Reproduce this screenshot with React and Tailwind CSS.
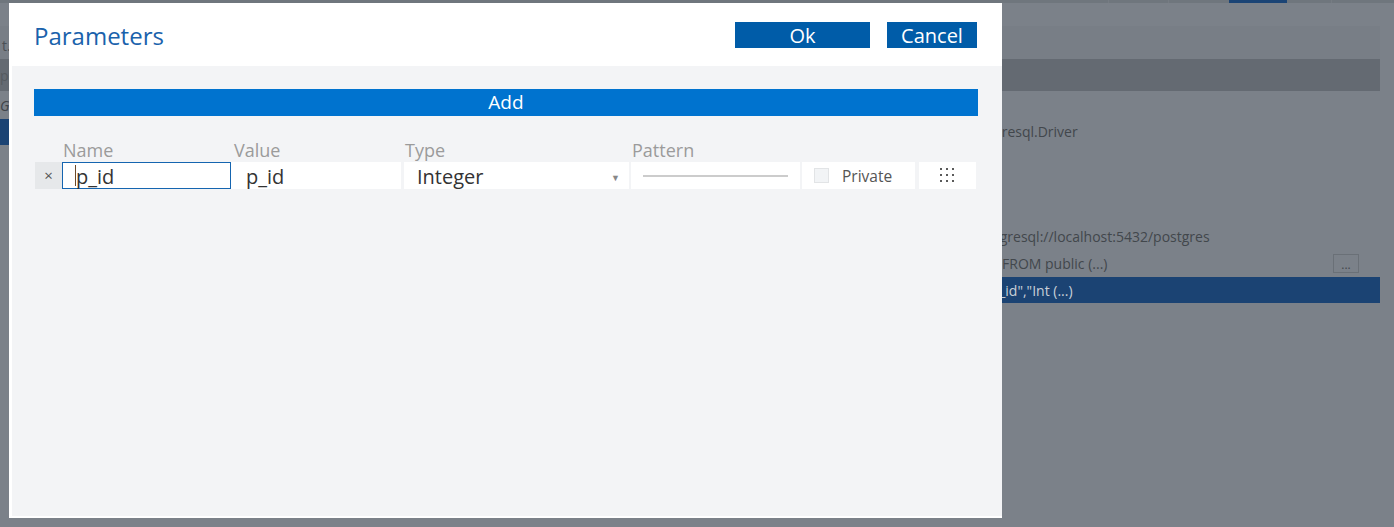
// Background page seen through the modal overlay
function BackgroundPage() {
  return (
    <div className="h-[527px] w-full bg-[#7b8189] overflow-hidden font-['Open_Sans',sans-serif] text-[14px] text-[#42474c]">
      <div className="h-[3px] flex bg-[#6f767d]">
        <div className="w-[1109px] border-r border-[#767c83]" />
        <div className="w-[60px] border-r border-[#767c83]" />
        <div className="w-[60px]" />
        <div className="w-[58px] bg-[#1b4475]" />
        <div className="w-[45px] border-r border-[#767c83]" />
      </div>
      <div className="mr-[14px]">
        <div className="h-[23px]" />
        <div className="h-[33px] bg-[#787e86] flex items-center pl-[2px] pt-[6px] text-[#4a4f55]">t.</div>
        <div className="h-[32px] bg-[#646a72] flex items-center text-[#555a60]">pe</div>
        <div className="flex">
          <div className="w-[90px]">
            <div className="h-[28px] flex items-center italic text-[#3f4449]">Gr</div>
            <div className="h-[26px] bg-[#1b4373]" />
          </div>
          <div className="flex-1 pl-[850px] pt-[27px]">
            <div className="h-[26px] flex items-center whitespace-nowrap">org.postgresql.Driver</div>
            <div className="h-[79px]" />
            <div className="h-[27px] flex items-center whitespace-nowrap">jdbc:postgresql://localhost:5432/postgres</div>
            <div className="h-[27px] flex items-center justify-between whitespace-nowrap">
              <span>SELECT * FROM public (...)</span>
              <span className="w-[26px] h-[19px] border border-[#6a7077] flex items-end justify-center text-[12px] leading-[14px] mr-[21px]">...</span>
            </div>
            <div className="h-[26px] bg-[#1b4373] flex items-center whitespace-nowrap text-[#c9d0d8]">
              <span className="-ml-[7px]">"name":"p_id","Int (...)</span>
            </div>
          </div>
        </div>
      </div>
    </div>
  )
}

function DotsGrid() {
  return (
    <svg width="14" height="15" viewBox="0 0 14 15" fill="#5a5a5a">
      {[1, 7, 13].map((y) =>
        [0, 6, 12].map((x) => <rect key={`${x}-${y}`} x={x} y={y - 1} width="2" height="2" />)
      )}
    </svg>
  )
}

function ParameterRow() {
  return (
    <div className="flex h-[27px] ml-[1px] text-[20px] text-[#333]">
      <div className="w-[27px] bg-[#e6e8ea] flex items-center justify-center text-[15px] text-[#555]">×</div>
      <div className="w-[169px] bg-white border border-[#1565b0] flex items-center relative pl-[13px]">
        <div className="absolute left-[12px] top-[2px] w-[1px] h-[21px] bg-[#6b4a2a]" />
        <span className="leading-[25px] pt-[2px]">p_id</span>
      </div>
      <div className="w-[170px] bg-white flex items-center pl-[15px]">
        <span className="leading-[25px] pt-[2px]">p_id</span>
      </div>
      <div className="w-[225px] ml-[3px] bg-white flex items-center justify-between pl-[13px] pr-[9px]">
        <span className="pt-[2px]">Integer</span>
        <span className="text-[#888] text-[9px] pt-[4px]">▼</span>
      </div>
      <div className="w-[169px] ml-[2px] bg-white flex items-center px-[12px]">
        <div className="h-[2px] w-full bg-[#cccccc]" />
      </div>
      <div className="w-[113px] ml-[2px] bg-white flex items-center pl-[12px]">
        <div className="w-[15px] h-[15px] bg-[#f2f4f6] border border-[#e2e4e6]" />
        <span className="ml-[13px] pt-[2px] text-[15.5px] text-[#555]">Private</span>
      </div>
      <div className="w-[57px] ml-[4px] bg-white flex items-center justify-center pr-[2px]">
        <DotsGrid />
      </div>
    </div>
  )
}

function ParametersDialog() {
  return (
    <div className="absolute left-[9px] top-[3px] w-[993px] h-[515px] bg-white flex flex-col font-['Open_Sans',sans-serif]">
      <div className="h-[63px] flex items-start justify-between shrink-0">
        <h1 className="ml-[25px] mt-[17px] text-[24px] leading-[32px] text-[#1a62ac]">Parameters</h1>
        <div className="flex gap-[17px] mt-[19px] mr-[25px]">
          <button className="w-[135px] h-[26px] bg-[#005ca8] text-white text-[20px] leading-[28px]">Ok</button>
          <button className="w-[90px] h-[26px] bg-[#005ca8] text-white text-[20px] leading-[28px]">Cancel</button>
        </div>
      </div>
      <div className="flex-1 ml-[3px] mb-[2px] bg-[#f3f4f6] pl-[22px] pr-[24px] pt-[23px]">
        <button className="w-full h-[27px] bg-[#0073cf] text-white text-[19px] leading-[27px] block">Add</button>
        <div className="flex mt-[22px] h-[24px] text-[18px] leading-[24px] text-[#9b9b9b]">
          <span className="w-[200px] pl-[29px]">Name</span>
          <span className="w-[171px]">Value</span>
          <span className="w-[227px]">Type</span>
          <span>Pattern</span>
        </div>
        <ParameterRow />
      </div>
    </div>
  )
}

export default function App() {
  return (
    <div className="relative w-full h-[527px] overflow-hidden">
      <BackgroundPage />
      <ParametersDialog />
    </div>
  )
}
